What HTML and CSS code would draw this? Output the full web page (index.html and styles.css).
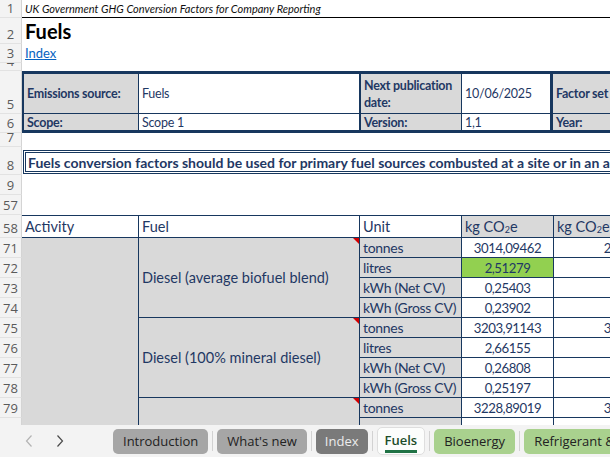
FILE: index.html
```html
<!DOCTYPE html>
<html lang="en">
<head>
<meta charset="utf-8">
<title>Fuels</title>
<link rel="stylesheet" href="styles.css">
</head>
<body>
<div class="app">
  <div class="sheet">
    <div class="grid">
      <div class="rh">1</div>
      <div class="c span5 title">UK Government GHG Conversion Factors for Company Reporting</div>

      <div class="rh">2</div>
      <div class="c span5 h1">Fuels</div>

      <div class="rh">3</div>
      <div class="c span5 linkcell"><a href="#" class="link">Index</a></div>

      <div class="rh">4</div>
      <div class="c span5"></div>

      <div class="rh">5</div>
      <div class="c hb r5 bl2 lab">Emissions source:</div>
      <div class="c hb r5 bl1">Fuels</div>
      <div class="c hb r5 bl2 lab wrap">Next publication date:</div>
      <div class="c hb r5 bl1 br3">10/06/2025</div>
      <div class="c hb r5 lab">Factor set</div>

      <div class="rh">6</div>
      <div class="c hb r6 bl2 lab">Scope:</div>
      <div class="c hb r6 bl1">Scope 1</div>
      <div class="c hb r6 bl2 lab">Version:</div>
      <div class="c hb r6 bl1 br3">1,1</div>
      <div class="c hb r6 lab">Year:</div>

      <div class="rh">7</div>
      <div class="c span5"></div>

      <div class="rh">8</div>
      <div class="c span5 notecell"><div class="notebox">Fuels conversion factors should be used for primary fuel sources combusted at a site or in an asset owned or controlled by the reporting organisation.</div></div>

      <div class="rh">9</div>
      <div class="c span5"></div>

      <div class="rh">57</div>
      <div class="c span5"></div>

      <div class="rh">58</div>
      <div class="c th">Activity</div>
      <div class="c th bl">Fuel</div>
      <div class="c th bl">Unit</div>
      <div class="c th bl gray">kg CO<sub>2</sub>e</div>
      <div class="c th bl gray">kg CO<sub>2</sub>e of CO<sub>2</sub> per unit</div>

      <div class="rh">71</div>
      <div class="c act"></div>
      <div class="c fuel span4">Diesel (average biofuel blend)</div>
      <div class="c unit">tonnes</div>
      <div class="c num">3014,09462</div>
      <div class="c num">2975,41546</div>

      <div class="rh">72</div>
      <div class="c unit">litres</div>
      <div class="c num green">2,51279</div>
      <div class="c num">2,4758</div>

      <div class="rh">73</div>
      <div class="c unit">kWh (Net CV)</div>
      <div class="c num">0,25403</div>
      <div class="c num">0,2503</div>

      <div class="rh">74</div>
      <div class="c unit">kWh (Gross CV)</div>
      <div class="c num">0,23902</div>
      <div class="c num">0,2355</div>

      <div class="rh">75</div>
      <div class="c fuel span4">Diesel (100% mineral diesel)</div>
      <div class="c unit">tonnes</div>
      <div class="c num">3203,91143</div>
      <div class="c num">3165,06531</div>

      <div class="rh">76</div>
      <div class="c unit">litres</div>
      <div class="c num">2,66155</div>
      <div class="c num">2,6293</div>

      <div class="rh">77</div>
      <div class="c unit">kWh (Net CV)</div>
      <div class="c num">0,26808</div>
      <div class="c num">0,2648</div>

      <div class="rh">78</div>
      <div class="c unit">kWh (Gross CV)</div>
      <div class="c num">0,25197</div>
      <div class="c num">0,2489</div>

      <div class="rh">79</div>
      <div class="c fuel span2"></div>
      <div class="c unit">tonnes</div>
      <div class="c num">3228,89019</div>
      <div class="c num">3189,27704</div>

      <div class="rh">80</div>
      <div class="c unit">litres</div>
      <div class="c num">2,70767</div>
      <div class="c num">2,6745</div>
    </div>
  </div>

  <div class="tabbar">
    <div class="nav">
      <svg class="arrow off" width="10" height="14" viewBox="0 0 10 14"><path d="M7.5 1.5 L2.5 7 L7.5 12.5" fill="none" stroke="currentColor" stroke-width="1.2"/></svg>
      <svg class="arrow" width="10" height="14" viewBox="0 0 10 14"><path d="M2.5 1.5 L7.5 7 L2.5 12.5" fill="none" stroke="currentColor" stroke-width="1.2"/></svg>
    </div>
    <div class="tab grey">Introduction</div>
    <div class="sep"></div>
    <div class="tab grey">What's new</div>
    <div class="sep"></div>
    <div class="tab dark">Index</div>
    <div class="sep"></div>
    <div class="tab active"><span class="activelabel">Fuels</span></div>
    <div class="sep"></div>
    <div class="tab green">Bioenergy</div>
    <div class="sep"></div>
    <div class="tab green">Refrigerant &amp; other</div>
  </div>
</div>
</body>
</html>
```

FILE: styles.css
```css
html, body {
  margin: 0;
  padding: 0;
}

body {
  width: 610px;
  height: 457px;
  overflow: hidden;
  background: #ffffff;
  font-family: Lato, "Liberation Sans", sans-serif;
  color: #1f3864;
}

.app {
  display: flex;
  flex-direction: column;
  width: 610px;
  height: 457px;
}

.sheet {
  flex: none;
  height: 425px;
  overflow: hidden;
}

.grid {
  display: grid;
  width: 721px;
  grid-template-columns: 22px 116px 221px 102px 92px 168px;
  grid-template-rows: 18px 26px 19px 8px 43px 19px 14px 28px 20px 20px 23px repeat(9, 20px) 26px;
}

/* row headers */
.rh {
  box-sizing: border-box;
  background: #f3f3f3;
  border-right: 1px solid #d4d4d4;
  border-bottom: 1px solid #e2e2e2;
  color: #5a5a5a;
  font-family: "Open Sans", "Noto Sans", sans-serif;
  font-size: 13px;
  line-height: 18px;
  display: flex;
  align-items: flex-end;
  justify-content: center;
  overflow: hidden;
}

/* generic cell */
.c {
  box-sizing: border-box;
  display: flex;
  align-items: center;
  min-width: 0;
  overflow: hidden;
  white-space: nowrap;
}

.span5 { grid-column: span 5; }
.span4 { grid-row: span 4; }
.span2 { grid-row: span 2; }

.title {
  align-items: flex-end;
  padding: 0 0 2px 3px;
  border-bottom: 1px solid #000000;
  font-style: italic;
  font-size: 11px;
  color: #111111;
}

.h1 {
  align-items: flex-end;
  padding: 0 0 1px 3px;
  font-weight: 700;
  font-size: 20px;
  color: #000000;
}

.linkcell {
  align-items: flex-end;
  padding: 0 0 2px 3px;
}

.link {
  color: #0563c1;
  font-size: 13px;
  text-decoration: underline;
}

/* header info box */
.hb {
  border: 0 solid #17375e;
  padding: 0 3px;
  font-size: 12.5px;
  letter-spacing: -0.25px;
  color: #1f3864;
}

.r5 { border-top-width: 3px; border-bottom-width: 1px; }
.r6 { border-bottom-width: 3px; }
.bl1 { border-left-width: 1px; }
.bl2 { border-left-width: 2px; }
.br3 { border-right-width: 3px; }

.lab {
  background: #d9d9d9;
  font-weight: 700;
}

.wrap {
  white-space: normal;
  line-height: 17px;
  padding-right: 0;
}

/* note row */
.notecell {
  padding: 3px 0 1px 1px;
  align-items: stretch;
}

.notebox {
  box-sizing: border-box;
  flex: 1;
  display: flex;
  align-items: center;
  border: 3px double #17375e;
  border-right: 0;
  padding-left: 2px;
  font-weight: 700;
  font-size: 14px;
  color: #1f3864;
  white-space: nowrap;
  overflow: hidden;
}

/* data table */
.th {
  border-top: 1px solid #17375e;
  border-bottom: 1px solid #17375e;
  padding-left: 3px;
  font-size: 14.5px;
  color: #1f3864;
}

.bl { border-left: 1px solid #17375e; }
.gray { background: #d9d9d9; }

sub {
  font-size: 0.62em;
  position: relative;
  top: 0.35em;
  vertical-align: baseline;
  line-height: 0;
}

.act {
  grid-row: span 10;
  background: #d9d9d9;
}

.fuel {
  position: relative;
  background: #d9d9d9;
  border-left: 1px solid #17375e;
  border-bottom: 1px solid #17375e;
  padding-left: 3px;
  font-size: 14.5px;
  color: #1f3864;
}

.fuel::after {
  content: "";
  position: absolute;
  top: 0;
  right: 0;
  width: 0;
  height: 0;
  border-style: solid;
  border-width: 0 6px 6px 0;
  border-color: transparent #d40000 transparent transparent;
}

.unit {
  background: #d9d9d9;
  border-left: 1px solid #17375e;
  border-bottom: 1px solid #17375e;
  padding-left: 3px;
  font-size: 14px;
  letter-spacing: -0.3px;
  color: #1f3864;
}

.num {
  justify-content: center;
  background: #ffffff;
  border-left: 1px solid #17375e;
  border-bottom: 1px solid #17375e;
  font-size: 13.2px;
  letter-spacing: -0.45px;
  color: #1f3864;
}

.num.green { background: #92d050; }

/* sheet tabs */
.tabbar {
  flex: none;
  height: 32px;
  display: flex;
  align-items: center;
  background: #f3f3f3;
  font-family: "Open Sans", "Noto Sans", sans-serif;
  font-size: 13px;
  white-space: nowrap;
  overflow: hidden;
}

.nav {
  flex: none;
  width: 113px;
  display: flex;
  align-items: center;
  gap: 21px;
  padding-left: 24px;
  box-sizing: border-box;
}

.arrow { color: #4a4a4a; display: block; }
.arrow.off { color: #b3b3b3; }

.tab {
  flex: none;
  box-sizing: border-box;
  height: 25px;
  padding: 0 10px;
  border-radius: 5px;
  display: flex;
  align-items: center;
  color: #222222;
}

.tab.grey { background: #a6a6a6; }
.tab.dark { background: #7a7a7a; color: #ececec; padding: 0 9px; }
.tab.green { background: #a9d18e; }

.tab.active {
  height: 28px;
  padding: 0 7px;
  background: #fcfdfc;
  border: 1px solid #dedede;
  border-radius: 5px;
  align-items: flex-start;
}

.activelabel {
  margin-top: 4px;
  padding-bottom: 1px;
  border-bottom: 3px solid #217346;
  color: #1d4d2a;
  font-weight: 600;
  line-height: 17px;
}

.sep {
  flex: none;
  width: 1px;
  height: 20px;
  margin: 0 4px;
  background: #d2d2d2;
}
```
